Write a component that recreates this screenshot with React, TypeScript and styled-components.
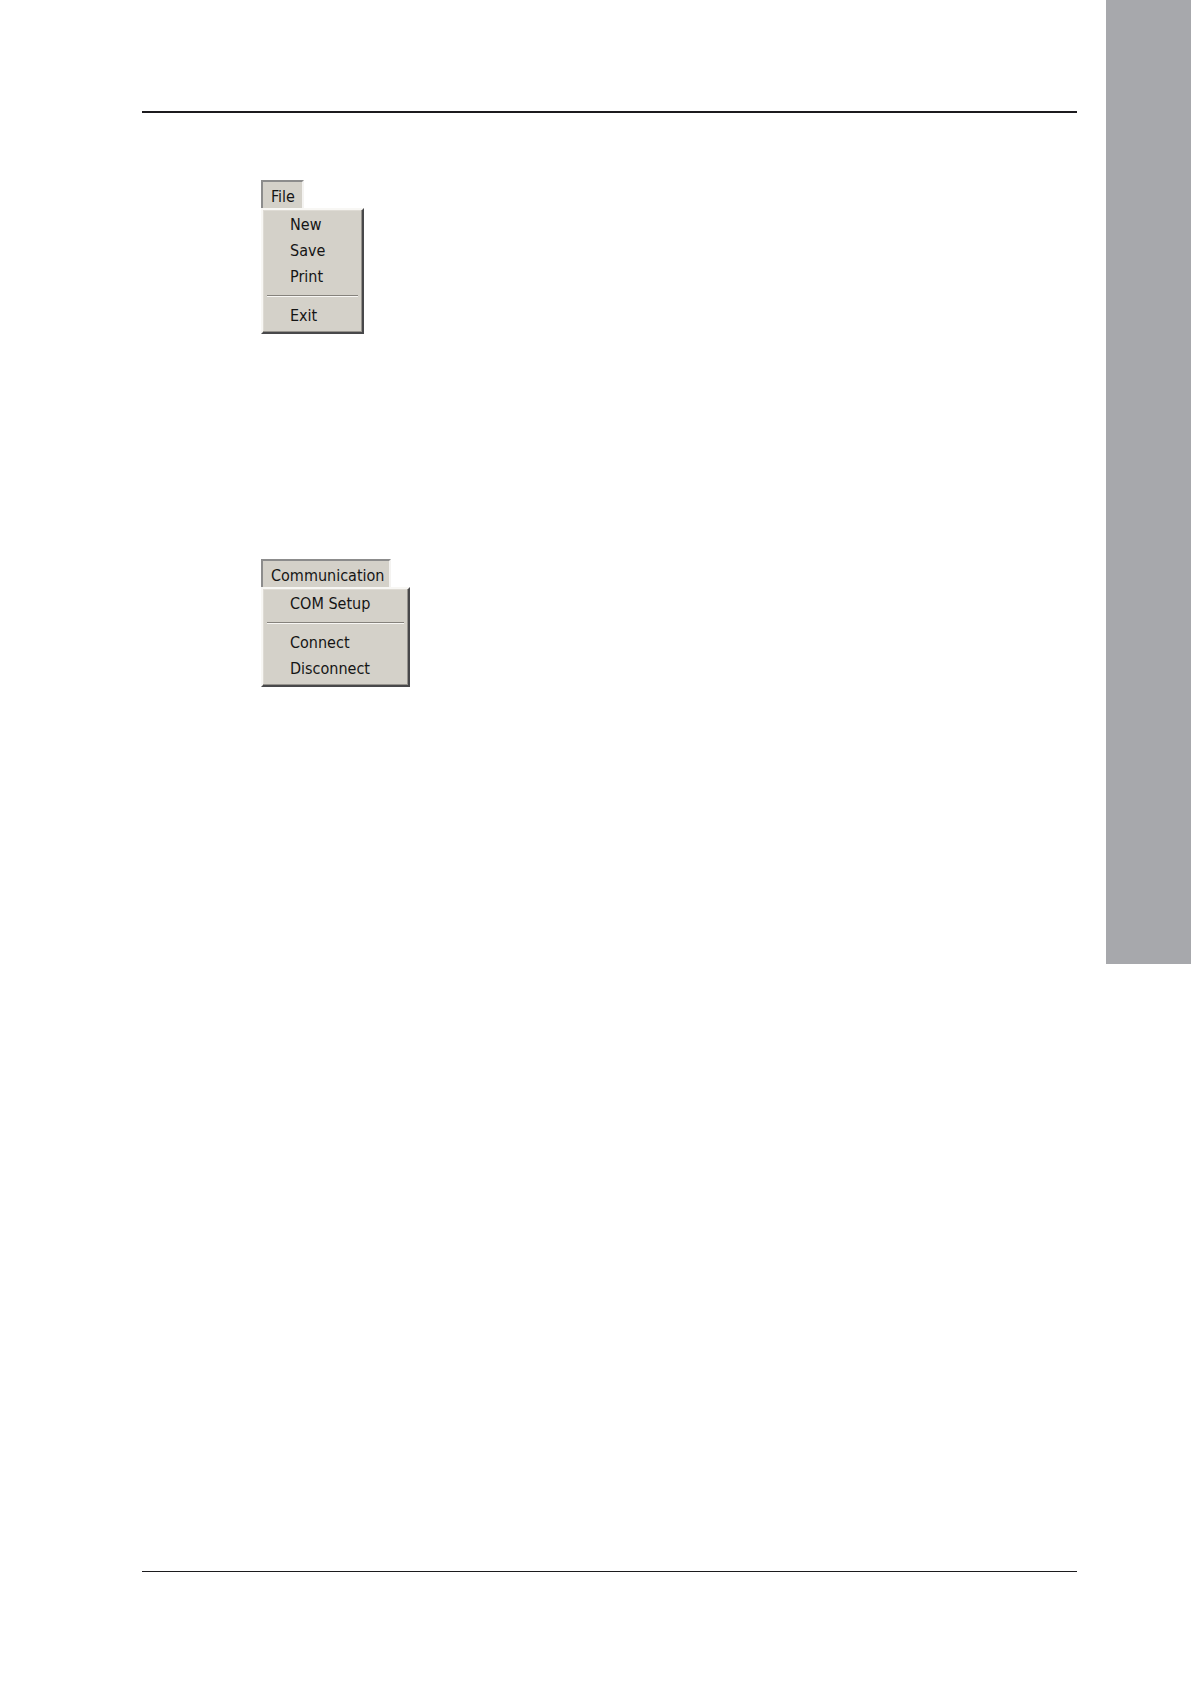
import React from "react";
import styled, { createGlobalStyle } from "styled-components";

const GlobalStyle = createGlobalStyle`
  *, *::before, *::after { box-sizing: border-box; }
  body { margin: 0; background: #fff; }
`;

const Page = styled.div`
  display: flex;
  align-items: flex-start;
  justify-content: space-between;
  min-height: 100vh;
  font-family: "DejaVu Sans Condensed", "DejaVu Sans", sans-serif;
  color: #151515;
`;

const Sheet = styled.main`
  flex: 1;
  display: flex;
  flex-direction: column;
  min-height: 100vh;
  padding: 111px 29px 112px 142px;
`;

const Rule = styled.hr<{ $weight: number }>`
  width: 100%;
  height: ${(p) => p.$weight}px;
  margin: 0;
  border: 0;
  background: #1c1b1e;
`;

const Figures = styled.div`
  flex: 1;
  display: flex;
  flex-direction: column;
  align-items: flex-start;
  gap: 225px;
  padding: 67px 0 0 119px;
`;

const ThumbTab = styled.aside`
  width: 85px;
  height: 964px;
  background: #a7a8ac;
`;

const MenuBlock = styled.nav`
  display: flex;
  flex-direction: column;
  align-items: flex-start;
`;

const MenuTitle = styled.button`
  min-width: 43px;
  height: 28px;
  padding: 3px 5px 0 8px;
  border: 2px solid;
  border-color: #8c8c8c #f4f3f1 #d4d0c8 #8c8c8c;
  border-bottom-width: 0;
  background: #d4d1c9;
  color: inherit;
  font: inherit;
  font-size: 16px;
  line-height: 22px;
  text-align: left;
`;

const MenuPanel = styled.ul<{ $width: number }>`
  min-width: ${(p) => p.$width}px;
  margin: 0;
  padding: 2px 4px 3px 4px;
  list-style: none;
  background: #d4d1c9;
  border: 2px solid;
  border-color: #f8f7f4 #48484a #48484a #f8f7f4;
  box-shadow: inset -1px -1px 0 #96938d, inset 1px 1px 0 #dedbd4;
`;

const MenuItem = styled.button`
  display: block;
  width: 100%;
  height: 26px;
  padding: 0 24px 0 23px;
  border: 0;
  background: transparent;
  color: inherit;
  font: inherit;
  font-size: 16px;
  line-height: 26px;
  text-align: left;
  white-space: nowrap;
`;

const Separator = styled.li`
  height: 2px;
  margin: 5px 0 6px;
  border-top: 1px solid #85827c;
  border-bottom: 1px solid #f8f7f4;
`;

interface MenuProps {
  title: string;
  groups: string[][];
  width: number;
}

function Menu({ title, groups, width }: MenuProps) {
  return (
    <MenuBlock aria-label={title}>
      <MenuTitle type="button" aria-expanded="true">{title}</MenuTitle>
      <MenuPanel $width={width}>
        {groups.map((items, index) => (
          <React.Fragment key={items[0]}>
            {index > 0 && <Separator role="separator" />}
            {items.map((item) => (
              <li key={item}>
                <MenuItem type="button">{item}</MenuItem>
              </li>
            ))}
          </React.Fragment>
        ))}
      </MenuPanel>
    </MenuBlock>
  );
}

export default function App() {
  return (
    <>
      <GlobalStyle />
      <Page>
        <Sheet>
          <Rule $weight={2} />
          <Figures>
            <Menu title="File" width={103} groups={[["New", "Save", "Print"], ["Exit"]]} />
            <Menu title="Communication" width={149} groups={[["COM Setup"], ["Connect", "Disconnect"]]} />
          </Figures>
          <Rule $weight={1} />
        </Sheet>
        <ThumbTab />
      </Page>
    </>
  );
}
